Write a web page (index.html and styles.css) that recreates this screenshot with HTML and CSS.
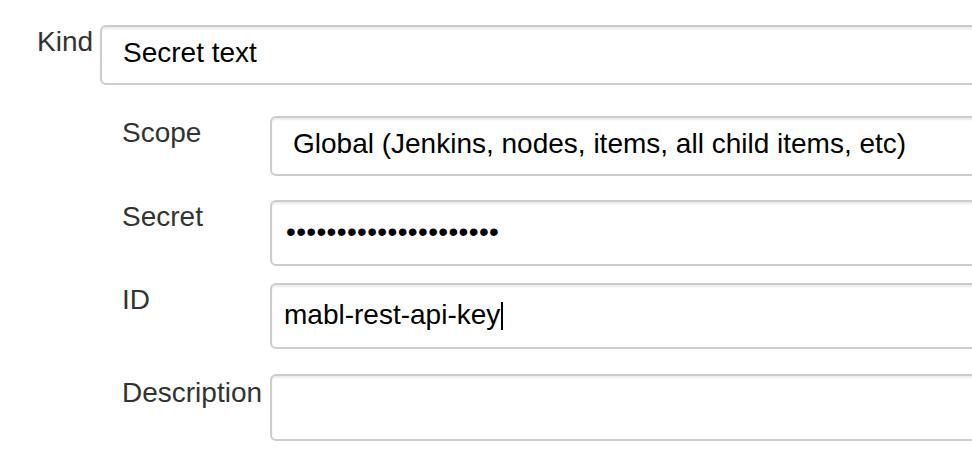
FILE: index.html
```html
<!DOCTYPE html>
<html lang="en">
<head>
<meta charset="utf-8">
<title>Credentials</title>
<link rel="stylesheet" href="styles.css">
</head>
<body>
<div class="form">
  <div class="kind-row">
    <div class="label kind-label">Kind</div>
    <div class="field select">Secret text</div>
  </div>
  <div class="nested">
    <div class="label">Scope</div>
    <div class="field select">Global (Jenkins, nodes, items, all child items, etc)</div>

    <div class="label gap-md">Secret</div>
    <div class="field input secret gap-md">•••••••••••••••••••••</div>

    <div class="label gap-sm">ID</div>
    <div class="field input gap-sm">mabl-rest-api-key<span class="caret"></span></div>

    <div class="label gap-lg">Description</div>
    <div class="field input desc gap-lg"></div>
  </div>
</div>
</body>
</html>
```

FILE: styles.css
```css
html, body {
  margin: 0;
  padding: 0;
  background: #fff;
  overflow: hidden;
}

body {
  font-family: "Liberation Sans", Arial, Helvetica, sans-serif;
  font-size: 28px;
  color: #000;
  width: 972px;
  height: 472px;
}

.form {
  width: 1010px;
  padding-top: 25px;
}

.kind-row {
  display: flex;
  align-items: flex-start;
  padding-left: 37px;
  gap: 7px;
}

.label {
  color: #333;
  line-height: 32px;
  padding-top: 1px;
  white-space: nowrap;
}

.field {
  flex: 1;
  box-sizing: border-box;
  border: 2px solid #ccc;
  border-radius: 6px;
  box-shadow: inset 0 2px 2px rgba(0, 0, 0, 0.075);
  display: flex;
  align-items: center;
  white-space: nowrap;
  line-height: 32px;
  color: #000;
}

.select {
  height: 60px;
  padding: 0 0 4px 21px;
}

.input {
  height: 66px;
  padding: 0 0 3px 12px;
}

.secret {
  padding-left: 14px;
  letter-spacing: 0.35px;
}

.nested {
  display: grid;
  grid-template-columns: 148px 1fr;
  padding-left: 122px;
  margin-top: 31px;
}

.gap-md {
  margin-top: 24px;
}

.gap-sm {
  margin-top: 17px;
}

.gap-lg {
  margin-top: 25px;
}

.label.gap-lg {
  padding-top: 3px;
}

.caret {
  display: inline-block;
  width: 2px;
  height: 28px;
  background: #000;
  margin-left: 1px;
  align-self: center;
  position: relative;
  top: 1px;
}

.desc {
  height: 67px;
}
```
